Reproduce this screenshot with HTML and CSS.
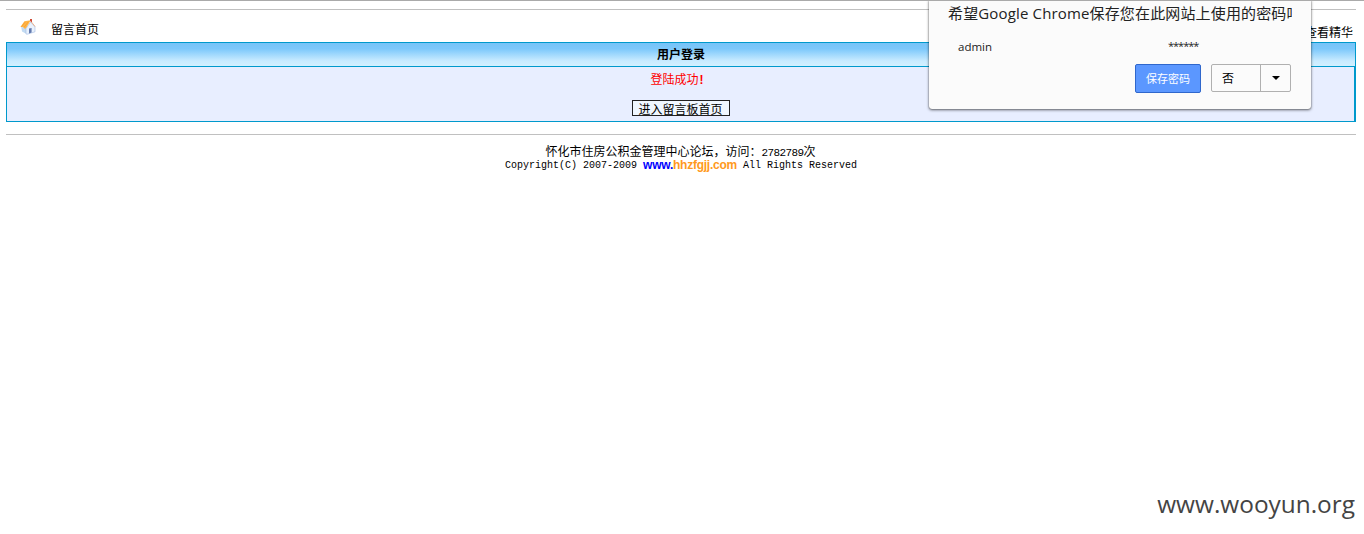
FILE: index.html
```html
<!DOCTYPE html>
<html lang="zh-CN">
<head>
<meta charset="utf-8">
<title>用户登录</title>
<link rel="stylesheet" href="styles.css">
</head>
<body>
<div class="page">
  <nav class="nav">
    <a class="home">
      <svg class="home-icon" width="16" height="16" viewBox="0 0 16 16">
        <path d="M1.2 8 7 8.5v6.8L2 12.6z" fill="#c2dbf3"/>
        <path d="M6 9.5l4.6-6.5L15 8v4.8l-8 2.5-1-.5z" fill="#e9f2fd" stroke="#a3bbe0" stroke-width=".6"/>
        <path d="M9 9.6l2.6-.6v4.6l-2.6.8z" fill="#6279ae"/>
        <path d="M.4 8 4.4 2.2 10.8 1.2 6.4 8.6 5 10 3 8z" fill="#ffb547"/>
        <path d="M1.5 7.6 5.2 3.1M4 8.4 8.4 2.6" stroke="#f59a2c" stroke-width=".7"/>
        <path d="M10.6 2l4.6 5.6" fill="none" stroke="#eab28e" stroke-width="1"/>
        <path d="M10 0h2v3.4l-2-1.6z" fill="#cf4b37"/>
      </svg>
      <span>留言首页</span>
    </a>
    <a class="best">查看精华</a>
  </nav>
  <section class="panel">
    <h1 class="panel-title">用户登录</h1>
    <div class="panel-body">
      <p class="message">登陆成功<b>!</b></p>
      <button class="enter">进入留言板首页</button>
    </div>
  </section>
  <footer class="footer">
    <div class="visits">怀化市住房公积金管理中心论坛，访问：<span class="mono">2782789</span>次</div>
    <div class="copyright"><span>Copyright(C) 2007-2009</span><b class="site">www.<i>hhzfgjj.com</i></b><span>All Rights Reserved</span></div>
  </footer>
</div>
<aside class="bubble">
  <div class="bubble-title">希望Google Chrome保存您在此网站上使用的密码吗</div>
  <div class="credentials"><span class="user">admin</span><span class="secret">******</span></div>
  <div class="actions">
    <button class="save">保存密码</button>
    <div class="split"><button class="no">否</button><button class="more"><i class="caret"></i></button></div>
  </div>
</aside>
<div class="watermark">www.wooyun.org</div>
</body>
</html>
```
FILE: styles.css
```css
* { box-sizing: border-box; }
body {
  margin: 0;
  height: 534px;
  overflow: hidden;
  position: relative;
  border-top: 1px solid #aaa;
  background: #fff;
  color: #000;
  font: 12px/14px "Liberation Sans", "Noto Sans CJK SC", sans-serif;
}
button { font: inherit; margin: 0; padding: 0; }
.page { margin: 8px 8px 0 6px; }
.nav {
  display: flex;
  justify-content: space-between;
  height: 33px;
  border-top: 1px solid #c0c0c0;
  padding: 9px 3px 0 14px;
}
.home { display: flex; align-items: flex-start; gap: 15px; }
.home span { padding-top: 4px; }
.best { padding-top: 7px; }
.panel { border: 1px solid #0099cc; }
.panel-title {
  margin: 0;
  height: 24px;
  border-bottom: 1px solid #0099cc;
  background: linear-gradient(#77c3f8 0, #7cc8fb 25%, #c9ebff 78%, #d2f0ff 100%);
  font-size: 12px;
  line-height: 25px;
  text-align: center;
}
.panel-body {
  display: flex;
  flex-direction: column;
  align-items: center;
  height: 54px;
  padding-top: 6px;
  border-right: 1px solid #0099cc;
  background: #e8eeff;
}
.message { margin: 0 0 13px; padding-right: 4px; color: #f00; }
.message b { padding: 0 3px 0 1px; }
.enter {
  width: 98px;
  height: 16px;
  border: 1px solid #222;
  background: #f0f7ff;
  line-height: 14px;
  padding-top: 2px;
  white-space: nowrap;
}
.footer { margin-top: 12px; border-top: 1px solid #c0c0c0; padding-top: 10px; text-align: center; }
.visits { height: 13px; padding-right: 1px; }
.mono, .copyright { font-family: "Liberation Mono", monospace; font-size: 10px; }
.mono { font-size: 11px; letter-spacing: -.6px; }
.copyright { display: flex; justify-content: center; gap: 6px; }
.copyright span { padding-top: 1px; }
.site { font: bold 12px/14px "Liberation Sans", sans-serif; letter-spacing: -.25px; color: #00f; }
.site i { font-style: normal; color: #ff9920; }
.bubble {
  position: absolute;
  left: 929px;
  top: -1px;
  width: 382px;
  height: 109px;
  padding: 3px 19px 0;
  border-radius: 0 0 3px 3px;
  background: #fbfbfb;
  box-shadow: 0 1px 3px rgba(0, 0, 0, .6), 0 0 1px rgba(0, 0, 0, .6);
  color: #222;
  font-family: "Open Sans", "Noto Sans CJK SC", sans-serif;
}
.bubble-title {
  width: 344px;
  overflow: hidden;
  white-space: nowrap;
  font-size: 15px;
  line-height: 20px;
  letter-spacing: .15px;
}
.credentials { display: flex; padding: 15px 0 0 10px; line-height: 16px; }
.user { width: 210px; font-size: 11.5px; padding-top: 1px; height: 17px; }
.secret { font-size: 11px; letter-spacing: -1px; height: 17px; }
.actions { display: flex; justify-content: flex-end; gap: 10px; margin: 9px 1px 0 0; }
.save {
  width: 66px;
  height: 29px;
  border: 1px solid #2f67cc;
  border-radius: 2px;
  background: #5b97ff;
  color: #fff;
  font-size: 11px;
}
.split { display: flex; width: 80px; height: 28px; border: 1px solid #b0b0b0; border-radius: 2px; }
.no { width: 49px; border: 0; border-right: 1px solid #b0b0b0; padding: 1px 0 0 10px; background: none; text-align: left; }
.more { flex: 1; display: flex; align-items: center; justify-content: center; border: 0; background: none; }
.caret { border: 4px solid transparent; border-top-color: #000; border-bottom: 0; }
.watermark {
  position: absolute;
  right: 9px;
  bottom: 13px;
  color: #444;
  font: 24.4px/34px "Open Sans", sans-serif;
}
```
